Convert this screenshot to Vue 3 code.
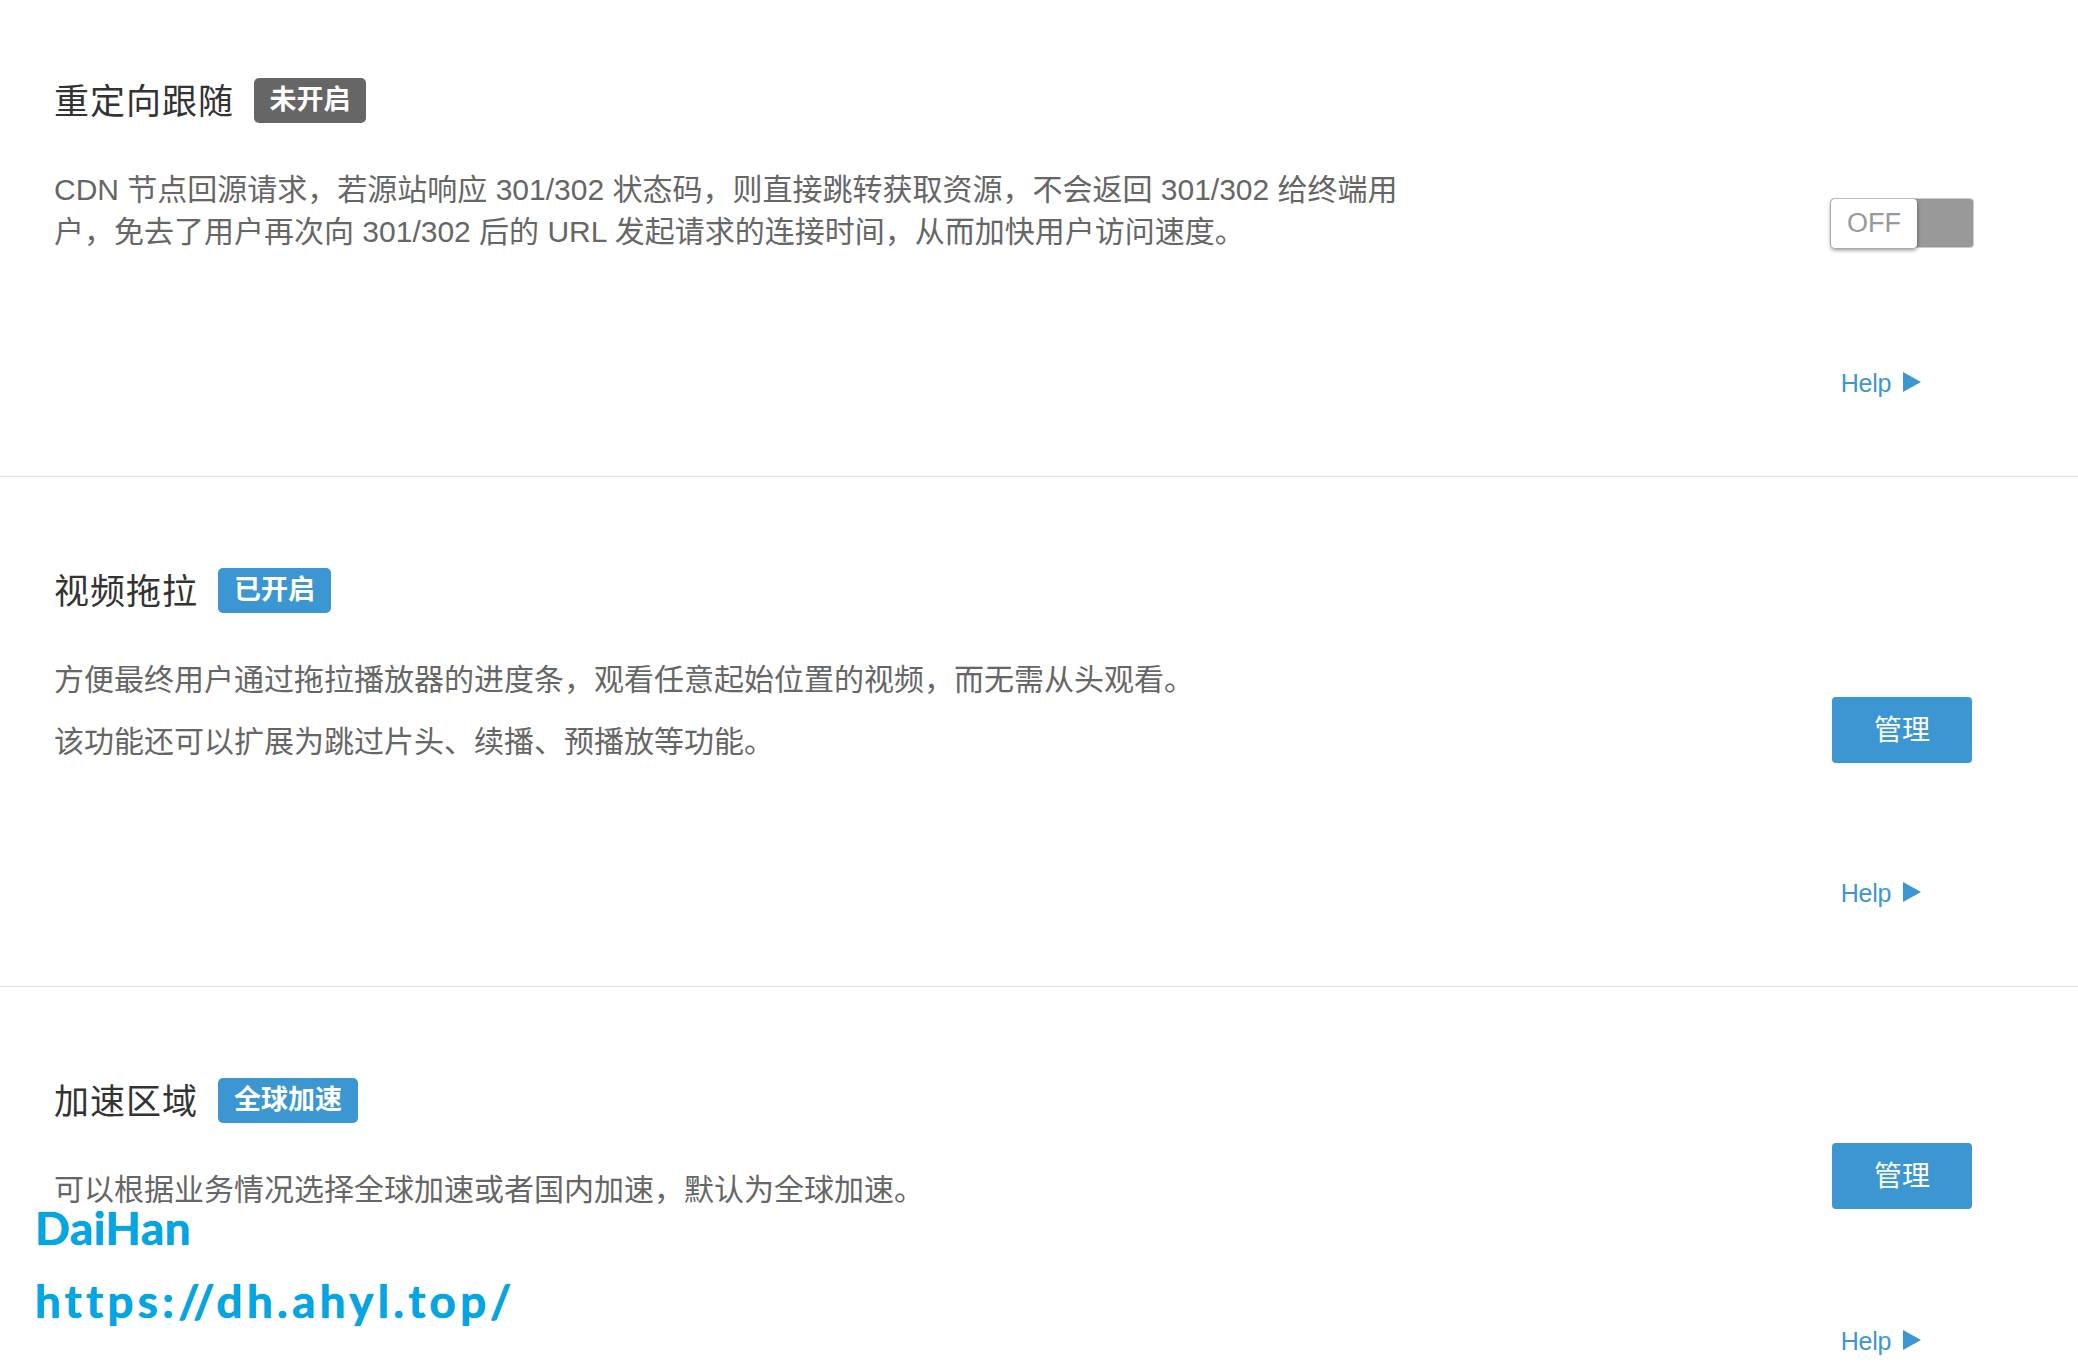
<script setup>
const sections = [
  {
    key: 'redirect',
    title: '重定向跟随',
    badge: '未开启',
    off: true,
    paras: ['CDN 节点回源请求，若源站响应 301/302 状态码，则直接跳转获取资源，不会返回 301/302 给终端用户，免去了用户再次向 301/302 后的 URL 发起请求的连接时间，从而加快用户访问速度。'],
    action: 'toggle'
  },
  {
    key: 'drag',
    title: '视频拖拉',
    badge: '已开启',
    paras: ['方便最终用户通过拖拉播放器的进度条，观看任意起始位置的视频，而无需从头观看。', '该功能还可以扩展为跳过片头、续播、预播放等功能。'],
    action: 'button'
  },
  {
    key: 'region',
    title: '加速区域',
    badge: '全球加速',
    paras: ['可以根据业务情况选择全球加速或者国内加速，默认为全球加速。'],
    action: 'button'
  }
]
</script>

<template>
  <div class="page">
    <section v-for="s in sections" :key="s.key" class="row" :class="'row-' + s.key">
      <div class="main">
        <div class="head">
          <h2 class="title">{{ s.title }}</h2>
          <span class="badge" :class="{ 'badge-off': s.off }">{{ s.badge }}</span>
        </div>
        <p v-for="p in s.paras" :key="p" class="desc">{{ p }}</p>
      </div>
      <div class="side">
        <div v-if="s.action === 'toggle'" class="toggle">
          <span class="knob">OFF</span>
        </div>
        <button v-else class="manage">管理</button>
        <a class="help">Help
          <svg class="arrow" viewBox="0 0 18 20" width="18" height="20"><path d="M0 0L18 10L0 20Z" fill="#3c96d2" /></svg>
        </a>
      </div>
    </section>
    <div class="mark">
      <div>DaiHan</div>
      <div class="mark-url">https://dh.ahyl.top/</div>
    </div>
  </div>
</template>

<style scoped>
.page {
  position: relative;
  width: 2078px;
  height: 1370px;
  overflow: hidden;
  background: #fff;
  font-family: "Liberation Sans", "Noto Sans CJK SC", sans-serif;
}
.row {
  display: flex;
  justify-content: space-between;
  box-sizing: border-box;
  height: 510px;
  padding: 91px 105px 0 54px;
  border-bottom: 1px solid #e2e2e2;
}
.row-redirect {
  height: 477px;
  padding-top: 78px;
}
.row-region {
  border-bottom: 0;
}
.main {
  width: 1345px;
}
.head {
  display: flex;
  align-items: center;
  gap: 20px;
  height: 45px;
  margin-bottom: 46px;
}
.title {
  margin: -5px 0 0;
  font-size: 35px;
  font-weight: 400;
  letter-spacing: 1px;
  color: #333;
}
.badge {
  height: 45px;
  padding: 0 16px;
  border-radius: 5px;
  background: #3c96d2;
  color: #fff;
  font-size: 27px;
  font-weight: 700;
  line-height: 44px;
}
.badge-off {
  padding: 0 15.5px;
  background: #666;
}
.desc {
  margin: 0 0 20px;
  font-size: 30px;
  line-height: 42px;
  color: #666;
}
.side {
  display: flex;
  flex-direction: column;
  align-items: center;
  width: 142px;
  padding-top: 129px;
}
.row-redirect .side {
  padding-top: 120px;
}
.row-region .side {
  padding-top: 65px;
}
.toggle {
  box-sizing: border-box;
  width: 144px;
  height: 50px;
  margin-bottom: 5px;
  border: 1px solid #ccc;
  border-radius: 4px;
  background: #999;
}
.knob {
  display: block;
  box-sizing: border-box;
  width: 86px;
  height: 49px;
  border-radius: 4px;
  background: #fff;
  color: #999;
  font-size: 27px;
  line-height: 49px;
  text-align: center;
  box-shadow: 0 2px 4px rgba(0, 0, 0, 0.45);
}
.manage {
  width: 140px;
  height: 66px;
  padding: 0 0 4px;
  border: 0;
  border-radius: 4px;
  background: #3c96d2;
  color: #fff;
  font-family: inherit;
  font-size: 28px;
}
.help {
  display: flex;
  align-items: center;
  gap: 12px;
  height: 30px;
  margin-top: 115px;
  margin-right: 42px;
  color: #3c96d2;
  font-size: 25px;
  letter-spacing: -0.2px;
}
.row-region .help {
  margin-top: 117px;
}
.arrow {
  margin-top: -3px;
}
.mark {
  position: absolute;
  left: 35px;
  top: 1191px;
  color: #00a7e6;
  font-family: Lato, sans-serif;
  font-weight: 700;
  font-size: 46px;
  line-height: 73px;
  letter-spacing: 0.5px;
  text-shadow: 0 0 1px #0a5f8c;
}
.mark-url {
  letter-spacing: 4.2px;
}
</style>
